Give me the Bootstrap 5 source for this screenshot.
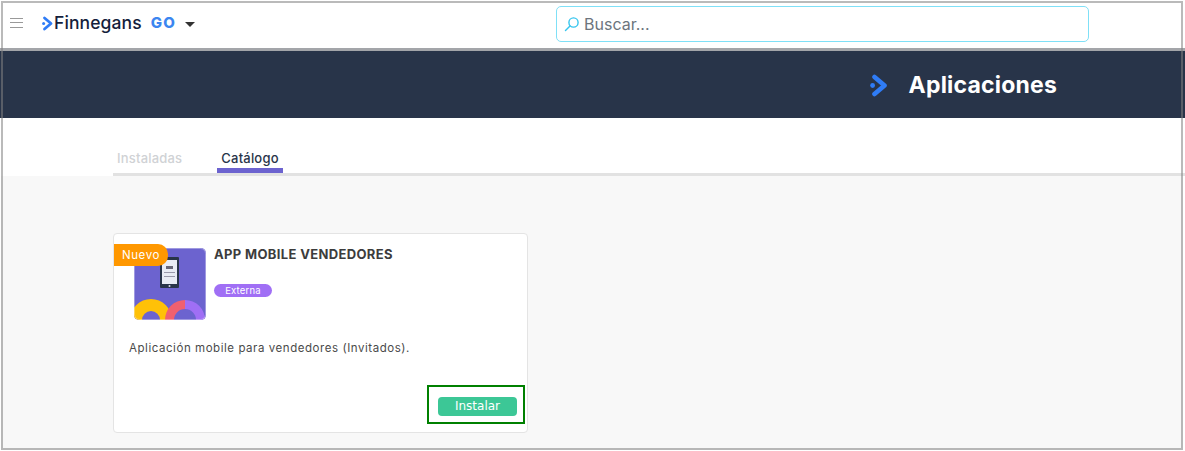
<!DOCTYPE html>
<html lang="es"><head><meta charset="utf-8"><title>Aplicaciones</title>
<link rel="stylesheet" href="https://cdn.jsdelivr.net/npm/bootstrap@5.3.0/dist/css/bootstrap.min.css">
<style>
html,body{height:451px;overflow:hidden;background:#fff}
body{font-family:Inter,"Liberation Sans",sans-serif;position:relative}
.frame-line{position:absolute;left:1px;top:1px;width:1182px;height:449px;border:2px solid rgba(130,130,130,.55);pointer-events:none}
.topbar{height:51px;background:#fff;border-bottom:3px solid #a3a5a9;padding:0 0 2px 10px;position:relative}
.burger{width:13px;height:10px;border-top:1px solid #999;border-bottom:1px solid #999;position:relative;margin-right:19px}
.burger::after{content:"";position:absolute;left:0;right:0;top:3px;height:1px;background:#999}
.brand{font-size:17.5px;font-weight:500;color:#141e3c;letter-spacing:.1px;line-height:1;margin-left:1px}
.brand-go{font-size:15px;font-weight:800;color:#3b86f0;letter-spacing:1.2px;margin-left:9px;margin-right:9px}
.caret-dn{width:0;height:0;border-left:5px solid transparent;border-right:5px solid transparent;border-top:5px solid #333;margin-top:3px}
.searchbox{position:absolute;left:556px;top:6px;width:533px;height:36px;border:1px solid #7fe0f7;border-radius:5px;background:#fff;padding-left:7px;gap:4px;color:#6c757d;font-size:16px}
.band{height:67px;background:#283449;color:#fff;padding:2px 128px 0 0}
.band-title{font-size:23px;font-weight:700;margin:0 0 0 22px;letter-spacing:.2px}
.tabstrip{height:55px;background:#fff;padding-left:113px}
.tab-item{font-size:13px;font-weight:500;height:25px;padding:0 4px;margin-right:31px;color:#d0d2d5;line-height:20px;letter-spacing:.2px;border-bottom:5px solid transparent}
.tab-item.on{color:#283449;border-bottom-color:#6c63cf;margin-right:0}
.tabrule{height:3px;background:#e2e2e2;margin-left:113px}
.graypane{height:274px;margin:0 2px 0 1px;background:#f8f8f8;padding:57px 0 0 112px}
.appcard{width:415px;height:200px;background:#fff;border:1px solid #e4e4e4;border-radius:4px;position:relative}
.ribbon{position:absolute;left:0;top:10px;width:54px;height:22px;background:#ff9800;color:#fff;font-size:11.5px;line-height:22px;text-align:center;border-radius:0 10px 10px 0;letter-spacing:.6px}
.appicon{position:absolute;left:20px;top:14px;width:72px;height:72px}
.appname{position:absolute;left:100px;top:13px;font-size:13px;font-weight:700;color:#3c3c3c;margin:0;letter-spacing:.35px}
.tagext{position:absolute;left:100px;top:50px;width:58px;height:13px;border-radius:7px;background:#a06ff5;color:#fff;font-size:9.5px;line-height:13px;text-align:center;letter-spacing:.2px}
.appdesc{position:absolute;left:15px;top:106px;font-size:11.5px;color:#4a4a4a;margin:0;letter-spacing:.55px}
.focusbox{position:absolute;right:2px;bottom:8px;width:98px;height:39px;border:2px solid #008000;padding:10px 8px 0 9px}
.installbtn{display:block;width:79px;height:19px;padding:0;background:#3cc796;color:#fff;border:0;border-radius:4px;line-height:19px;font-family:"DejaVu Sans",sans-serif;font-size:12px}
</style></head><body>
 <header class="topbar d-flex align-items-center">
  <span class="burger"></span>
  <svg width="11" height="15" viewBox="0 0 11 15"><path d="M2.500 2 9 7.500 2.500 13" fill="none" stroke="#2f7cf6" stroke-width="2.800" stroke-linecap="round" stroke-linejoin="round"/><circle cx="1.600" cy="7.500" r="1.500" fill="#2f7cf6"/></svg>
  <span class="brand">Finnegans</span><span class="brand-go">GO</span><span class="caret-dn"></span>
  <div class="searchbox d-flex align-items-center">
   <svg width="16" height="16" viewBox="0 0 16 16"><circle cx="9.500" cy="6.500" r="4.600" fill="none" stroke="#36c5ee" stroke-width="1.400"/><path d="M6 10 1.500 14.500" stroke="#36c5ee" stroke-width="1.400" stroke-linecap="round"/></svg>
   <span>Buscar...</span>
  </div>
 </header>
 <section class="band d-flex align-items-center justify-content-end">
  <svg width="17" height="23" viewBox="0 0 17 23"><path d="M4.500 3 14.500 11.500 4.500 20" fill="none" stroke="#2f7cf6" stroke-width="4.600" stroke-linecap="round" stroke-linejoin="round"/><circle cx="2.600" cy="11.500" r="2.400" fill="#2f7cf6"/></svg>
  <h1 class="band-title">Aplicaciones</h1>
 </section>
 <nav class="tabstrip d-flex align-items-end">
  <div class="tab-item">Instaladas</div>
  <div class="tab-item on">Catálogo</div>
 </nav>
 <div class="tabrule"></div>
 <main class="graypane">
 <article class="appcard">
  <svg class="appicon" viewBox="0 0 72 72">
   <defs><clipPath id="iconclip"><rect width="72" height="72" rx="5"/></clipPath></defs>
   <g clip-path="url(#iconclip)">
    <rect width="72" height="72" fill="#6c63cf"/>
    <rect x="26" y="9" width="19" height="31" rx="1" fill="#283449"/><rect x="28" y="12" width="15" height="24" fill="#e8ecf4"/><rect x="32" y="18" width="7" height="3" fill="#667"/><rect x="30" y="24" width="11" height="1" fill="#99a"/><rect x="30" y="28" width="11" height="1" fill="#99a"/><circle cx="35.500" cy="38" r="1" fill="#dde"/>
    <path d="M-4 72a21 21 0 0 1 21-21 21 21 0 0 1 21 21H26a9 9 0 0 0-18 0z" fill="#ffc107"/>
    <path d="M31 72a20 20 0 0 1 20-20v9a11 11 0 0 0-11 11z" fill="#f0606f"/>
    <path d="M51 52a20 20 0 0 1 20 20H62a11 11 0 0 0-11-11z" fill="#a06ff5"/>
   </g>
   <rect x=".5" y=".5" width="71" height="71" rx="5" fill="none" stroke="#fff" stroke-opacity=".35"/>
  </svg>
  <span class="ribbon">Nuevo</span>
  <h2 class="appname">APP MOBILE VENDEDORES</h2>
  <span class="tagext">Externa</span>
  <p class="appdesc">Aplicación mobile para vendedores (Invitados).</p>
  <div class="focusbox"><button class="installbtn btn" type="button">Instalar</button></div>
 </article>
 </main>
 <div class="frame-line"></div>
<script src="https://cdn.jsdelivr.net/npm/bootstrap@5.3.0/dist/js/bootstrap.bundle.min.js"></script>
</body></html>
